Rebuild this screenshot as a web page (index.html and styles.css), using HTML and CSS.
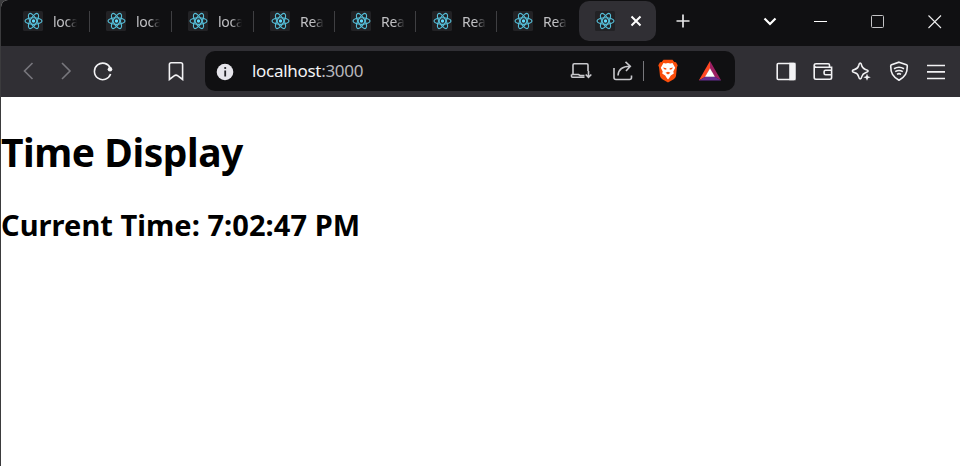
FILE: index.html
```html
<!DOCTYPE html>
<html lang="en">
<head>
<meta charset="utf-8">
<title>Time Display</title>
<link rel="stylesheet" href="styles.css">
</head>
<body>
<svg class="defs" aria-hidden="true">
  <symbol id="react" viewBox="0 0 20 20">
    <rect width="20" height="20" rx="1.5" fill="#222225"/>
    <g fill="none" stroke="#55bdd7" stroke-width="1.15">
      <ellipse cx="10.5" cy="10" rx="8.5" ry="3.3"/>
      <ellipse cx="10.5" cy="10" rx="8.5" ry="3.3" transform="rotate(60 10.5 10)"/>
      <ellipse cx="10.5" cy="10" rx="8.5" ry="3.3" transform="rotate(120 10.5 10)"/>
    </g>
    <circle cx="10.5" cy="10" r="1.7" fill="#61dafb"/>
  </symbol>
</svg>
<div class="window">
  <header class="tabbar">
    <nav class="tabs">
      <div class="tab"><svg class="favicon"><use href="#react"/></svg><span class="label">loca</span></div>
      <div class="tab"><svg class="favicon"><use href="#react"/></svg><span class="label">loca</span></div>
      <div class="tab"><svg class="favicon"><use href="#react"/></svg><span class="label">loca</span></div>
      <div class="tab"><svg class="favicon"><use href="#react"/></svg><span class="label">Rea</span></div>
      <div class="tab"><svg class="favicon"><use href="#react"/></svg><span class="label">Rea</span></div>
      <div class="tab"><svg class="favicon"><use href="#react"/></svg><span class="label">Rea</span></div>
      <div class="tab plain"><svg class="favicon"><use href="#react"/></svg><span class="label">Rea</span></div>
      <div class="tab active"><svg class="favicon"><use href="#react"/></svg><svg class="close" viewBox="0 0 12 12"><path d="M1.500 1.500l9 9M10.500 1.500l-9 9" stroke="#fff" stroke-width="2"/></svg></div>
    </nav>
    <svg class="plus" viewBox="0 0 14 14"><path d="M7 .5v13M.5 7h13" stroke="#e6e6e8" stroke-width="1.700"/></svg>
    <div class="controls">
      <svg viewBox="0 0 16 16"><path d="M2.500 5.500L8 11l5.500-5.500" fill="none" stroke="#fff" stroke-width="2.200"/></svg>
      <svg viewBox="0 0 16 16"><path d="M2 8.500h13" stroke="#fff"/></svg>
      <svg viewBox="0 0 16 16"><rect x="2.500" y="2.500" width="12" height="12" rx="1" fill="none" stroke="#c4c4c6"/></svg>
      <svg viewBox="0 0 16 16"><path d="M2.500 2.500l12.500 12.500M15 2.500L2.500 15" stroke="#eee" stroke-width="1.100"/></svg>
    </div>
  </header>
  <div class="toolbar">
    <div class="history">
      <svg class="dim" viewBox="0 0 20 20"><path d="M14.500 2L6.500 10l8 8"/></svg>
      <svg class="dim" viewBox="0 0 20 20"><path d="M6 2l8 8-8 8"/></svg>
      <svg viewBox="0 0 20 20"><path d="M17.400 7.200A8.300 8.300 0 1 0 17.600 13.100"/><circle cx="17" cy="8.300" r="2.300" fill="#f2f2f4" stroke="none"/></svg>
    </div>
    <svg class="bookmark" viewBox="0 0 20 20"><path d="M5.200 1.700h9.600q1.800 0 1.800 1.800v15l-4.700-3.700q-1.900-1.300-3.800 0l-4.700 3.700v-15q0-1.800 1.800-1.800z"/></svg>
    <div class="address">
      <svg class="info" viewBox="0 0 18 18"><circle cx="9" cy="9" r="8.300" fill="#e6e5eb"/><path d="M9.200 7.500v6" fill="none" stroke="#222226" stroke-width="1.800"/><circle cx="9.200" cy="5" r="1.100" fill="#222226"/></svg>
      <span class="url">localhost<span class="port">:3000</span></span>
      <svg class="install" viewBox="0 0 22 20"><path d="M3 13.500V4q0-1.200 1.200-1.200h12.600Q18 2.800 18 4v6M1.500 13.500h7l1.500 1h4.500M1.500 13.500v1.800q0 1 1 1h12M18.500 10v6M15.700 13.500l2.800 2.800 2.800-2.800"/></svg>
      <svg class="share" viewBox="0 0 22 20"><path d="M2 7v9.500q0 2 2 2h13.500q2 0 2-2v-2M6 14.500q.5-9.300 12-9.300M13.500.800L18.300 5.200l-4.300 4.800"/></svg>
      <span class="rule"></span>
      <svg class="lion" viewBox="0 0 20 24"><path d="M5.500.7h9L16.300 3l1.700.3 1.700 3-.8 2.200-.9 8.500q-.4 2-2.300 3.300L10 23.500l-5.700-3.200Q2.400 19 2 17L1.100 8.500.3 6.300l1.700-3L3.700 3z" fill="#fb4e0b"/><path d="M5.500 4l2.200.6L10 4l2.300.6 2.200-.6 2.700 4.800-1.900 3.700.5 2-3 2-1.400 2.300L10 20.400l-1.400-1.600-1.400-2.300-3-2 .5-2-1.900-3.700z" fill="#fff"/><path d="M5 8.500l3.400.8-.2 1.400-2-.4zM15 8.500l-3.400.8.200 1.400 2-.4zM7.500 13.800l2.500-1 2.500 1L10 15.500z" fill="#fb4e0b"/></svg>
      <svg class="bat" viewBox="0 0 24 20"><path d="M12 0L.8 19.500 7.500 15.800 12 7.500z" fill="#ff4724"/><path d="M12 0l11.200 19.500-6.700-3.700L12 7.500z" fill="#9e1f63"/><path d="M.8 19.500h22.400l-6.700-4h-9z" fill="#662d91"/><path d="M12 7.200l4.900 8.600H7.100z" fill="#fff"/></svg>
    </div>
    <div class="actions">
      <svg viewBox="0 0 20 20"><rect x="1.200" y="2.500" width="17.500" height="16" rx="1"/><path d="M14 2.500h4.700v16H14z" fill="#f2f2f4"/></svg>
      <svg viewBox="0 0 20 20"><path d="M16.500 6V4q0-1.300-1.300-1.300H3Q1.200 2.700 1.200 4v12.500q0 1.700 1.700 1.700h14q1.700 0 1.700-1.700V6.200H3Q1.200 6.200 1.200 4M18.600 9.300h-6q-1.500 0-1.500 1.500v1.500q0 1.500 1.500 1.500h6"/></svg>
      <svg viewBox="0 0 20 20"><path d="M9.200 2q1 0 1.400 2.200.7 3.300 3.900 4.300 2.700.8 2.700 1.600t-2.700 1.600q-2.800.9-3.600 3.700-.6 2.500-1.700 2.500t-1.700-2.500q-.7-2.900-3.600-3.700-2.600-.7-2.600-1.700t2.600-1.600q3.200-.8 3.900-4.200Q8.200 2 9.200 2z"/><path d="M16 12.500l1 2.800 2.800 1-2.800 1-1 2.500-1-2.500-2.700-1 2.700-1z" fill="#f2f2f4" stroke="none"/></svg>
      <svg viewBox="0 0 20 20"><path d="M10 1.200l7.500 2.600q.8.300.8 1.200c0 7-2 10.500-8.300 14.300C3.700 15.500 1.700 12 1.700 5q0-.9.800-1.200zM5 7.800q5-3 10 0M6.200 10.700q3.800-2.500 7.600 0M8 13.300q2-1.300 4 0"/></svg>
      <svg viewBox="0 0 20 20"><path d="M1 4.500h18M1 10.900h18M1 17.500h18"/></svg>
    </div>
  </div>
  <main class="page">
    <h1>Time Display</h1>
    <h2>Current Time: 7:02:47 PM</h2>
  </main>
</div>
</body>
</html>
```
FILE: styles.css
```css
* { box-sizing: border-box; }
body { margin: 0; background: #3b3b3d; font-family: "Noto Sans", sans-serif; }
svg { display: block; flex: none; }
.defs { display: none; }
.window { width: 959px; height: 466px; margin-left: 1px; overflow: hidden; background: #fff; border-top-left-radius: 7px; }

.tabbar { display: flex; align-items: center; height: 46px; padding-left: 6px; background: #101012; }
.tabs { display: grid; grid-template-columns: 83px 82px 82px 81px 81px 81px 82px 77px; height: 40px; margin-top: -4px; }
.tab { display: flex; align-items: center; gap: 10px; padding-left: 16px; background: linear-gradient(#3f3f42, #3f3f42) right 50% / 1px 21px no-repeat; }
.tab.plain { background: none; }
.tab.active { background: #302f34; border-radius: 10px; gap: 15px; }
.favicon { width: 20px; height: 20px; }
.label { width: 24px; overflow: hidden; white-space: nowrap; font-size: 14px; letter-spacing: -.3px; color: #c1c1c4; -webkit-mask-image: linear-gradient(90deg, #000 55%, transparent); mask-image: linear-gradient(90deg, #000 55%, transparent); }
.close { width: 12px; height: 12px; }
.plus { width: 14px; height: 14px; margin: -4px 0 0 20px; }
.controls { display: grid; grid-template-columns: 50px 57px 57px 16px; margin: -4px 0 0 72px; }
.controls svg { width: 16px; height: 16px; }

.toolbar { display: flex; align-items: center; height: 51px; padding: 0 0 1px 17px; background: #302f34; }
.toolbar svg { fill: none; stroke: #f2f2f4; stroke-width: 1.6; }
.history { display: grid; grid-template-columns: 38px 37px 20px; }
.history svg, .bookmark, .actions svg { width: 20px; height: 20px; }
.toolbar .dim { stroke: #78777d; }
.history, .bookmark, .actions { margin-top: -1px; }
.bookmark { margin-left: 53px; }
.address { display: flex; align-items: center; width: 530px; height: 40px; margin-left: 19px; padding-left: 11px; border-radius: 10px; background: #101012; }
.toolbar .address .info, .toolbar .address .lion, .toolbar .address .bat { stroke: none; }
.info { width: 18px; height: 18px; margin-top: 1px; }
.url { width: 317px; margin: -2px 0 0 18px; font-size: 17px; letter-spacing: -.3px; color: #f3f3f5; }
.port { color: #b8b8bc; }
.toolbar .install, .toolbar .share { width: 22px; height: 20px; stroke: #c8c8cc; }
.install { margin-left: 1px; }
.share { margin-left: 20px; }
.rule { width: 1px; height: 20px; margin-left: 9px; background: #77777b; }
.lion { width: 20px; height: 24px; margin-left: 14px; }
.bat { width: 24px; height: 20px; margin-left: 20px; }
.actions { display: grid; grid-template-columns: 37px 38px 38px 37px 20px; margin-left: 41px; }

.page { color: #000; }
h1, h2 { margin: 0; font-weight: 700; white-space: nowrap; }
h1 { padding-top: 28px; font-size: 39px; line-height: 54px; letter-spacing: -.45px; }
h2 { margin-top: 26px; font-size: 29px; line-height: 40px; letter-spacing: .05px; }
```
